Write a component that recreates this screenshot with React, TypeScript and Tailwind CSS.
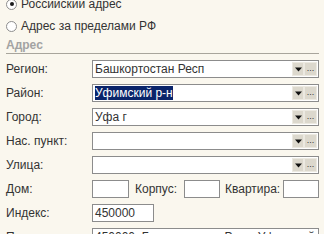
import React from 'react';

function Radio({ checked, label }: { checked?: boolean; label: string }) {
  return (
    <div className="flex items-center h-[20px]">
      <span className="w-[11px] h-[11px] rounded-full border border-[#8e8e8e] bg-white flex items-center justify-center">
        {checked && <span className="w-[4px] h-[4px] rounded-full bg-[#1a1a1a]" />}
      </span>
      <span className="ml-[4px]">{label}</span>
    </div>
  );
}

function DropButtons() {
  return (
    <div className="flex h-full py-[1px] pr-[1px]">
      <div className="w-[12px] h-full bg-[#dcd8cd] border border-[#ece9e1] flex items-center justify-center">
        <svg width="7" height="5" viewBox="0 0 7 5">
          <path d="M0 0.5h7L3.5 4.5z" fill="#111" />
        </svg>
      </div>
      <div className="w-[13px] h-full bg-[#dcd8cd] border border-[#ece9e1] flex items-end justify-center pb-[2px] text-[9px] leading-none text-[#333]">
        ...
      </div>
    </div>
  );
}

function FieldRow({ label, children, select }: { label: string; children?: React.ReactNode; select?: boolean }) {
  return (
    <div className="flex items-center h-[18px]">
      <div className="w-[86px] whitespace-nowrap">{label}</div>
      <div className="flex-1 min-w-0 h-full border border-[#8c8c8c] bg-white flex items-center">
        <div className="flex-1 pl-[2px] whitespace-nowrap overflow-hidden">{children}</div>
        {select && <DropButtons />}
      </div>
    </div>
  );
}

function Box({ w, children }: { w: string; children?: React.ReactNode }) {
  return (
    <div className={`${w} h-full border border-[#8c8c8c] bg-white flex items-center pl-[2px]`}>{children}</div>
  );
}

export default function App() {
  return (
    <div className="w-[324px] h-[234px] overflow-hidden bg-[#faf7ee] text-[12px] leading-[14px] text-[#333] font-['Liberation_Sans',Arial,sans-serif]">
      <div className="-mt-[6px] pl-[6px] pr-[5px] flex flex-col">
        {/* Тип адреса */}
        <div className="flex flex-col gap-[2px]">
          <Radio checked label="Российский адрес" />
          <Radio label="Адрес за пределами РФ" />
        </div>

        {/* Группа Адрес */}
        <div className="h-[18px] border-b border-[#a8a59c] flex items-center font-bold text-[#a3a3a3]">
          Адрес
        </div>

        <div className="mt-[6px] flex flex-col gap-[6px]">
          <FieldRow label="Регион:" select>
            Башкортостан Респ
          </FieldRow>
          <FieldRow label="Район:" select>
            <span className="bg-[#0a246a] text-white">Уфимский р-н</span>
          </FieldRow>
          <FieldRow label="Город:" select>
            Уфа г
          </FieldRow>
          <FieldRow label="Нас. пункт:" select />
          <FieldRow label="Улица:" select />

          <div className="flex items-center h-[18px]">
            <div className="w-[86px]">Дом:</div>
            <Box w="w-[37px]" />
            <div className="w-[55px] pl-[6px]">Корпус:</div>
            <Box w="w-[36px]" />
            <div className="w-[63px] pl-[5px]">Квартира:</div>
            <Box w="w-[36px]" />
          </div>

          <div className="flex items-center h-[18px]">
            <div className="w-[86px]">Индекс:</div>
            <Box w="w-[62px]">450000</Box>
          </div>

          <FieldRow label="Представление:">
            450000, Башкортостан Респ, Уфимский р-н, Уфа г
          </FieldRow>
        </div>
      </div>
    </div>
  );
}
